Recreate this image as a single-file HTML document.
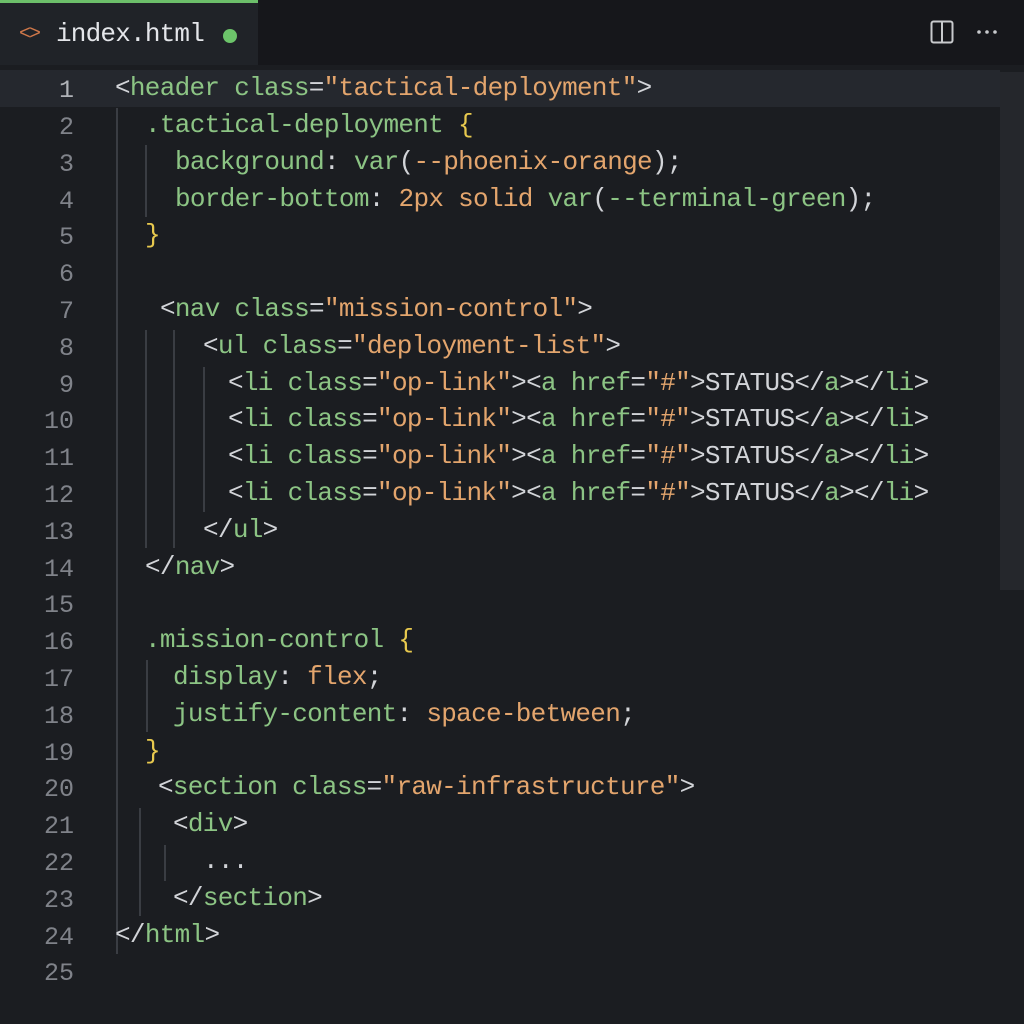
<!DOCTYPE html>
<html><head><meta charset="utf-8"><style>
*{margin:0;padding:0;box-sizing:border-box}
body{width:1024px;height:1024px;background:#1b1d21;overflow:hidden;position:relative;font-family:"Liberation Mono",monospace;}
.tabbar{position:absolute;left:0;top:0;width:1024px;height:65px;background:#16171b}
.tab{position:absolute;left:0;top:0;width:258px;height:65px;background:#202328;border-top:3px solid #6cbf6a}
.tab .name{position:absolute;left:56px;top:16px;font-size:26px;color:#e4e6ea;letter-spacing:-0.8px}
.tab .ic{position:absolute;left:19px;top:20px;font-size:20px;color:#d0784a;letter-spacing:-2px}
.tab .dot{position:absolute;left:223px;top:26px;width:14px;height:14px;border-radius:50%;background:#6cc46a}
.hl{position:absolute;left:0;top:70px;width:1000px;height:37px;background:#25282e}
.scroll{position:absolute;left:1000px;top:72px;width:24px;height:518px;background:#25272c}
.ln{position:absolute;left:0;width:74px;text-align:right;font-size:25px;color:#80838a;margin-top:2px}
.c{position:absolute;font-size:26px;white-space:pre;color:#d4d6d9;letter-spacing:-0.7px;margin-top:0px}
.g{color:#8cc484}.o{color:#e3a56d}.y{color:#e8c94e}.w{color:#d2d4d8}
.gd{position:absolute;width:1.5px;background:#3a3d43}
</style></head><body>
<div class="tabbar"></div>
<div class="tab"><span class="ic">&lt;&gt;</span><span class="name">index.html</span><span class="dot"></span></div>
<svg style="position:absolute;left:930px;top:20px" width="24" height="24" viewBox="0 0 24 24"><rect x="1.5" y="1.5" width="21" height="21" rx="2" fill="none" stroke="#c8cacd" stroke-width="2"/><line x1="12" y1="2" x2="12" y2="22" stroke="#c8cacd" stroke-width="2"/></svg>
<svg style="position:absolute;left:976px;top:28px" width="24" height="8" viewBox="0 0 24 8"><circle cx="3" cy="4" r="1.8" fill="#c8cacd"/><circle cx="11" cy="4" r="1.8" fill="#c8cacd"/><circle cx="19" cy="4" r="1.8" fill="#c8cacd"/></svg>
<div class="hl"></div>
<div class="scroll"></div>

<div class="gd" style="left:116px;top:108px;height:846px"></div>
<div class="gd" style="left:145px;top:145px;height:72px"></div>
<div class="gd" style="left:145px;top:330px;height:218px"></div>
<div class="gd" style="left:173px;top:330px;height:218px"></div>
<div class="gd" style="left:203px;top:367px;height:145px"></div>
<div class="gd" style="left:146px;top:660px;height:72px"></div>
<div class="gd" style="left:139px;top:808px;height:108px"></div>
<div class="gd" style="left:164px;top:845px;height:36px"></div>

<div class="ln" style="top:74px;color:#b0b3b8">1</div>
<div class="ln" style="top:111px">2</div>
<div class="ln" style="top:148px">3</div>
<div class="ln" style="top:185px">4</div>
<div class="ln" style="top:221px">5</div>
<div class="ln" style="top:258px">6</div>
<div class="ln" style="top:295px">7</div>
<div class="ln" style="top:332px">8</div>
<div class="ln" style="top:369px">9</div>
<div class="ln" style="top:405px">10</div>
<div class="ln" style="top:442px">11</div>
<div class="ln" style="top:479px">12</div>
<div class="ln" style="top:516px">13</div>
<div class="ln" style="top:553px">14</div>
<div class="ln" style="top:589px">15</div>
<div class="ln" style="top:626px">16</div>
<div class="ln" style="top:663px">17</div>
<div class="ln" style="top:700px">18</div>
<div class="ln" style="top:737px">19</div>
<div class="ln" style="top:773px">20</div>
<div class="ln" style="top:810px">21</div>
<div class="ln" style="top:847px">22</div>
<div class="ln" style="top:884px">23</div>
<div class="ln" style="top:921px">24</div>
<div class="ln" style="top:957px">25</div>

<div class="c" style="left:115px;top:73px"><span class="w">&lt;</span><span class="g">header class</span><span class="w">=</span><span class="o">"tactical-deployment"</span><span class="w">&gt;</span></div>
<div class="c" style="left:145px;top:110px"><span class="g">.tactical-deployment </span><span class="y">{</span></div>
<div class="c" style="left:175px;top:147px"><span class="g">background</span><span class="w">: </span><span class="g">var</span><span class="w">(</span><span class="o">--phoenix-orange</span><span class="w">);</span></div>
<div class="c" style="left:175px;top:184px"><span class="g">border-bottom</span><span class="w">: </span><span class="o">2px solid </span><span class="g">var</span><span class="w">(</span><span class="g">--terminal-green</span><span class="w">);</span></div>
<div class="c" style="left:145px;top:220px"><span class="y">}</span></div>
<div class="c" style="left:160px;top:294px"><span class="w">&lt;</span><span class="g">nav class</span><span class="w">=</span><span class="o">"mission-control"</span><span class="w">&gt;</span></div>
<div class="c" style="left:203px;top:331px"><span class="w">&lt;</span><span class="g">ul class</span><span class="w">=</span><span class="o">"deployment-list"</span><span class="w">&gt;</span></div>
<div class="c" style="left:228px;top:368px"><span class="w">&lt;</span><span class="g">li class</span><span class="w">=</span><span class="o">"op-link"</span><span class="w">&gt;&lt;</span><span class="g">a href</span><span class="w">=</span><span class="o">"#"</span><span class="w">&gt;STATUS&lt;/</span><span class="g">a</span><span class="w">&gt;&lt;/</span><span class="g">li</span><span class="w">&gt;</span></div>
<div class="c" style="left:228px;top:404px"><span class="w">&lt;</span><span class="g">li class</span><span class="w">=</span><span class="o">"op-link"</span><span class="w">&gt;&lt;</span><span class="g">a href</span><span class="w">=</span><span class="o">"#"</span><span class="w">&gt;STATUS&lt;/</span><span class="g">a</span><span class="w">&gt;&lt;/</span><span class="g">li</span><span class="w">&gt;</span></div>
<div class="c" style="left:228px;top:441px"><span class="w">&lt;</span><span class="g">li class</span><span class="w">=</span><span class="o">"op-link"</span><span class="w">&gt;&lt;</span><span class="g">a href</span><span class="w">=</span><span class="o">"#"</span><span class="w">&gt;STATUS&lt;/</span><span class="g">a</span><span class="w">&gt;&lt;/</span><span class="g">li</span><span class="w">&gt;</span></div>
<div class="c" style="left:228px;top:478px"><span class="w">&lt;</span><span class="g">li class</span><span class="w">=</span><span class="o">"op-link"</span><span class="w">&gt;&lt;</span><span class="g">a href</span><span class="w">=</span><span class="o">"#"</span><span class="w">&gt;STATUS&lt;/</span><span class="g">a</span><span class="w">&gt;&lt;/</span><span class="g">li</span><span class="w">&gt;</span></div>
<div class="c" style="left:203px;top:515px"><span class="w">&lt;/</span><span class="g">ul</span><span class="w">&gt;</span></div>
<div class="c" style="left:145px;top:552px"><span class="w">&lt;/</span><span class="g">nav</span><span class="w">&gt;</span></div>
<div class="c" style="left:145px;top:625px"><span class="g">.mission-control </span><span class="y">{</span></div>
<div class="c" style="left:173px;top:662px"><span class="g">display</span><span class="w">: </span><span class="o">flex</span><span class="w">;</span></div>
<div class="c" style="left:173px;top:699px"><span class="g">justify-content</span><span class="w">: </span><span class="o">space-between</span><span class="w">;</span></div>
<div class="c" style="left:145px;top:736px"><span class="y">}</span></div>
<div class="c" style="left:158px;top:772px"><span class="w">&lt;</span><span class="g">section class</span><span class="w">=</span><span class="o">"raw-infrastructure"</span><span class="w">&gt;</span></div>
<div class="c" style="left:173px;top:809px"><span class="w">&lt;</span><span class="g">div</span><span class="w">&gt;</span></div>
<div class="c" style="left:203px;top:846px"><span class="w">...</span></div>
<div class="c" style="left:173px;top:883px"><span class="w">&lt;/</span><span class="g">section</span><span class="w">&gt;</span></div>
<div class="c" style="left:115px;top:920px"><span class="w">&lt;/</span><span class="g">html</span><span class="w">&gt;</span></div>
</body></html>
